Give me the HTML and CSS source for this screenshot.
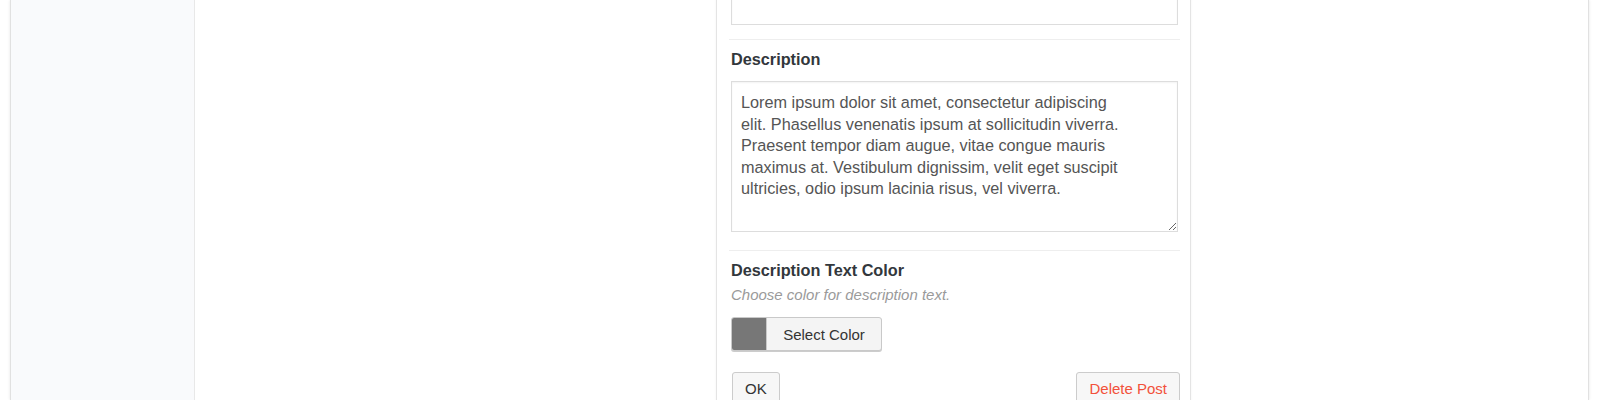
FILE: index.html
```html
<!DOCTYPE html>
<html lang="en">
<head>
<meta charset="utf-8">
<title>Edit Post</title>
<link rel="stylesheet" href="styles.css">
</head>
<body>
<div class="frame">
  <aside class="sidebar"></aside>
  <main class="main">
    <form class="panel">
      <div class="field field-top">
        <input class="input" type="text" aria-label="Title">
      </div>
      <hr class="sep">
      <div class="field field-desc">
        <label class="label" for="desc">Description</label>
        <textarea class="textarea" id="desc">Lorem ipsum dolor sit amet, consectetur adipiscing
elit. Phasellus venenatis ipsum at sollicitudin viverra.
Praesent tempor diam augue, vitae congue mauris
maximus at. Vestibulum dignissim, velit eget suscipit
ultricies, odio ipsum lacinia risus, vel viverra.</textarea>
      </div>
      <hr class="sep">
      <div class="field">
        <div class="label">Description Text Color</div>
        <p class="help">Choose color for description text.</p>
        <button type="button" class="color-btn"><span class="swatch"></span><span class="color-text">Select Color</span></button>
      </div>
      <div class="actions">
        <button type="button" class="btn btn-ok">OK</button>
        <button type="button" class="btn btn-danger">Delete Post</button>
      </div>
    </form>
  </main>
</div>
</body>
</html>
```

FILE: styles.css
```css
* {
  box-sizing: border-box;
}

html, body {
  margin: 0;
  padding: 0;
  background: #ffffff;
  font-family: "Liberation Sans", Arial, sans-serif;
  color: #333333;
}

.frame {
  display: flex;
  margin-left: 10px;
  width: 1579px;
  height: 100vh;
  overflow: hidden;
  border-left: 1px solid #e1e1e1;
  border-right: 1px solid #e1e1e1;
  box-shadow: 0 0 3px rgba(0, 0, 0, 0.10);
  background: #ffffff;
}

.sidebar {
  flex: 0 0 184px;
  background: #f9fafc;
  border-right: 1px solid #e8e8e8;
}

.main {
  flex: 1;
  padding-left: 521px;
}

.panel {
  width: 475px;
  margin-top: -12px;
  padding: 0 10px 14px 12px;
  border: 1px solid #e4e4e4;
  box-shadow: 0 0 2px rgba(0, 0, 0, 0.06);
  background: #ffffff;
}

.field {
  padding: 0 2px;
}

.field-desc {
  padding-bottom: 4px;
}

.input {
  display: block;
  width: 100%;
  height: 36px;
  margin: 0;
  border: 1px solid #dddddd;
  box-shadow: inset 0 1px 2px rgba(0, 0, 0, 0.05);
  background: #ffffff;
  font: inherit;
}

.sep {
  height: 1px;
  margin: 14px 0 9px;
  border: 0;
  background: #eeeeee;
}

.label {
  display: block;
  font-size: 16.25px;
  line-height: 20px;
  font-weight: bold;
  color: #32373c;
}

.field > .label + .textarea {
  margin-top: 12px;
}

.textarea {
  display: block;
  width: 100%;
  height: 151px;
  margin: 0;
  padding: 10px 9px;
  border: 1px solid #dddddd;
  box-shadow: inset 0 1px 2px rgba(0, 0, 0, 0.05);
  font-family: "Liberation Sans", Arial, sans-serif;
  font-size: 16.25px;
  line-height: 21.6px;
  color: #555555;
  background: #ffffff;
  white-space: pre-wrap;
  resize: vertical;
  outline: none;
}

.help {
  margin: 5px 0 12px;
  font-size: 15px;
  line-height: 20px;
  font-style: italic;
  color: #9a9a9a;
}

.color-btn {
  display: flex;
  align-items: stretch;
  height: 34px;
  width: 151px;
  margin: 0;
  padding: 0;
  border: 1px solid #c9c9c9;
  border-radius: 3px;
  background: #f4f4f4;
  box-shadow: 0 1px 0 #cccccc;
  font-family: "Liberation Sans", Arial, sans-serif;
  font-size: 15px;
  color: #333333;
  overflow: hidden;
}

.swatch {
  flex: 0 0 35px;
  background: #777777;
  border-right: 1px solid #c9c9c9;
}

.color-text {
  flex: 1;
  display: flex;
  align-items: center;
  justify-content: center;
}

.actions {
  display: flex;
  justify-content: space-between;
  margin-top: 21px;
}

.btn {
  height: 32px;
  margin: 0;
  padding: 0 12px;
  border: 1px solid #cccccc;
  border-radius: 3px;
  background: #f7f7f7;
  box-shadow: 0 1px 0 #cccccc;
  font-family: "Liberation Sans", Arial, sans-serif;
  font-size: 15px;
  color: #333333;
}

.btn-ok {
  margin-left: 3px;
}

.btn-danger {
  color: #f2513b;
}
```
